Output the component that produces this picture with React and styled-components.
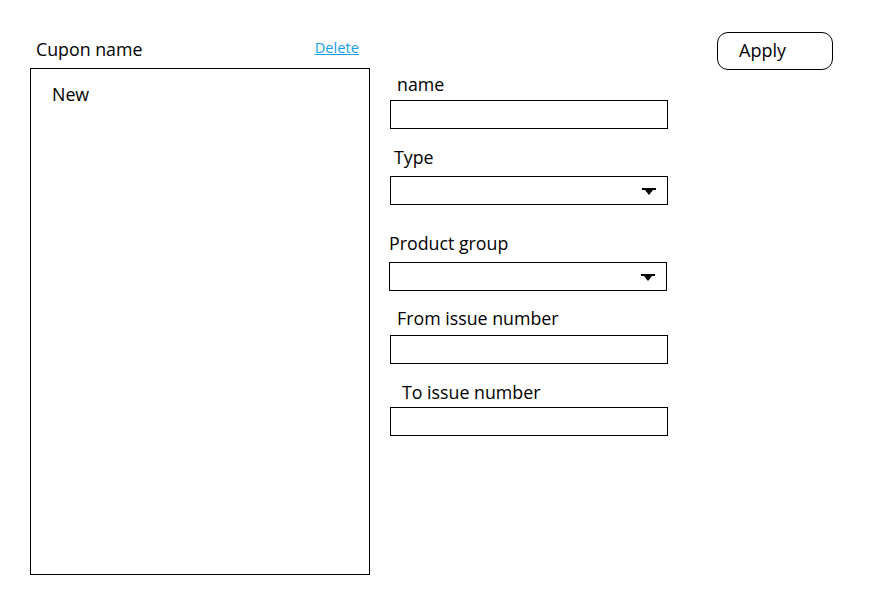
import React from "react";
import styled, { createGlobalStyle } from "styled-components";

const Global = createGlobalStyle`
  html, body { margin: 0; padding: 0; background: #fff; }
  body { font-family: "Open Sans", "Noto Sans", sans-serif; color: #000; }
`;

const Page = styled.div`
  display: flex;
  align-items: flex-start;
  padding: 32px 0 0 30px;
  width: 871px;
  height: 598px;
  box-sizing: border-box;
`;

const LeftColumn = styled.div`
  width: 340px;
  display: flex;
  flex-direction: column;
`;

const ListHeader = styled.div`
  height: 36px;
  display: flex;
  align-items: center;
  justify-content: space-between;
  padding: 0 11px 2px 6px;
  box-sizing: border-box;
`;

const HeaderTitle = styled.span`
  font-size: 17.8px;
  line-height: 22px;
`;

const DeleteLink = styled.a`
  font-size: 14.7px;
  line-height: 18px;
  color: #14a0e6;
  text-decoration: underline;
  cursor: pointer;
  margin-top: -4px;
`;

const ListBox = styled.div`
  height: 507px;
  border: 1px solid #000;
  box-sizing: border-box;
  padding: 13px 0 0 21px;
`;

const ListItem = styled.div`
  font-size: 17.8px;
  line-height: 24px;
`;

const Form = styled.div`
  margin-left: 19px;
  margin-top: 42px;
  width: 280px;
  display: flex;
  flex-direction: column;
`;

const Field = styled.div`
  display: flex;
  flex-direction: column;
  margin-top: ${(p) => p.$top || 0}px;
`;

const Label = styled.label`
  font-size: 17.8px;
  line-height: 20px;
  padding-left: ${(p) => p.$indent || 0}px;
  margin-bottom: ${(p) => p.$gap || 6}px;
`;

const TextBox = styled.div`
  width: 278px;
  height: 29px;
  border: 1px solid #000;
  box-sizing: border-box;
  margin-left: ${(p) => p.$shift ?? 1}px;
  position: relative;
`;

const Arrow = styled.svg`
  position: absolute;
  right: 11px;
  top: 11px;
`;

const ApplyButton = styled.button`
  margin-left: 48px;
  width: 116px;
  height: 38px;
  border: 1px solid #000;
  border-radius: 11px;
  background: #fff;
  font-family: "Open Sans", "Noto Sans", sans-serif;
  font-size: 18px;
  text-align: left;
  padding: 0 0 2px 21px;
  color: #000;
`;

const DropArrow = () => (
  <Arrow width="14" height="7" viewBox="0 0 14 7">
    <polygon points="0,0 14,0 14,2 11,2 7,7 3,2 0,2" fill="#000" />
  </Arrow>
);

export default function App() {
  return (
    <>
      <Global />
      <Page>
        <LeftColumn>
          <ListHeader>
            <HeaderTitle>Cupon name</HeaderTitle>
            <DeleteLink>Delete</DeleteLink>
          </ListHeader>
          <ListBox>
            <ListItem>New</ListItem>
          </ListBox>
        </LeftColumn>
        <Form>
          <Field>
            <Label $indent={8} $gap={6}>name</Label>
            <TextBox />
          </Field>
          <Field $top={18}>
            <Label $indent={5} $gap={9}>Type</Label>
            <TextBox>
              <DropArrow />
            </TextBox>
          </Field>
          <Field $top={28}>
            <Label $indent={0} $gap={9}>Product group</Label>
            <TextBox $shift={0}>
              <DropArrow />
            </TextBox>
          </Field>
          <Field $top={17}>
            <Label $indent={8} $gap={7}>From issue number</Label>
            <TextBox />
          </Field>
          <Field $top={18}>
            <Label $indent={13} $gap={5}>To issue number</Label>
            <TextBox />
          </Field>
        </Form>
        <ApplyButton>Apply</ApplyButton>
      </Page>
    </>
  );
}
